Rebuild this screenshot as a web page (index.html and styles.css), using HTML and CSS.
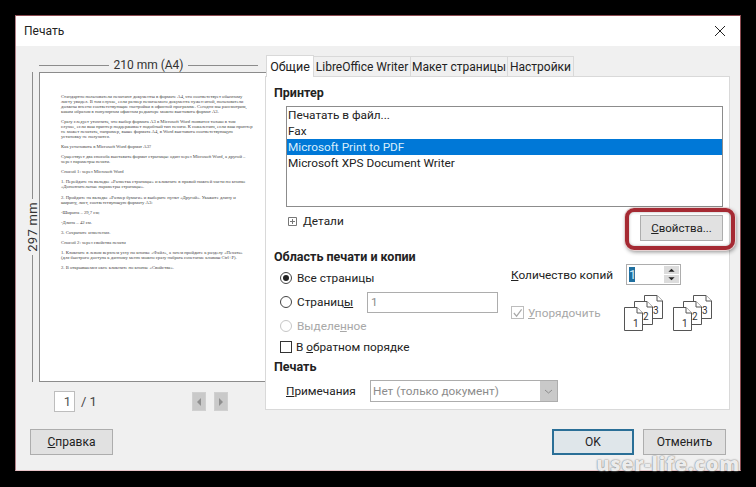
FILE: index.html
```html
<!DOCTYPE html>
<html lang="ru">
<head>
<meta charset="utf-8">
<title>Печать</title>
<link rel="stylesheet" href="styles.css">
</head>
<body>
<div class="window">
  <header class="titlebar">
    <span class="title">Печать</span>
    <svg class="close" width="12" height="12" viewBox="0 0 12 12"><path d="M1 1L11 11M11 1L1 11" fill="none" stroke="#222" stroke-width="1"/></svg>
  </header>
  <div class="content">
    <section class="preview">
      <div class="width-label"><span>210 mm (A4)</span></div>
      <div class="preview-row">
        <div class="height-label"><span>297 mm</span></div>
        <div class="page">
          <p>Стандартно пользователи печатают документы в формате А4, что соответствует обычному<br>листу увидел. В том случае, если размер печатаемого документа нужен иной, пользователи<br>должны внести соответствующие настройки в офисной программе. Сегодня мы рассмотрим,<br>каким образом в популярном офисном редакторе можно выставить формат А3.</p>
          <p>Сразу следует уточнить, что выбор формата А3 в Microsoft Word появится только в том<br>случае, если ваш принтер поддерживает подобный тип печати. К сожалению, если ваш принтер<br>не может печатать, например, выше формата А4, в Word выставить соответствующую<br>установку не получится.</p>
          <p>Как установить в Microsoft Word формат А3?</p>
          <p>Существует два способа выставить формат страницы: один через Microsoft Word, а другой –<br>через параметры печати.</p>
          <p>Способ 1: через Microsoft Word</p>
          <p>1. Перейдите на вкладке «Разметка страницы» и кликните в правой нижней части по кнопке<br>«Дополнительные параметры страницы».</p>
          <p>2. Пройдите на вкладке «Размер бумаги» и выберите пункт «Другой». Укажите длину и<br>ширину, лист, соответствующую формату А3:</p>
          <p>-Ширина – 29,7 см;</p>
          <p>-Длина – 42 см.</p>
          <p>3. Сохраните изменения.</p>
          <p>Способ 2: через свойства печати</p>
          <p>1. Кликните в левом верхнем углу по кнопке «Файл», а затем пройдите к разделу «Печать»<br>(для быстрого доступа к данному меню можно сразу набрать сочетание клавиш Ctrl+P).</p>
          <p>2. В открывшемся окне кликните по кнопке «Свойства».</p>
        </div>
      </div>
      <div class="page-nav">
        <span class="page-input">1</span>
        <span class="page-total">/ 1</span>
        <span class="nav-btn nav-prev"><svg width="6" height="10" viewBox="0 0 6 10"><path d="M5 1L1 5L5 9Z" fill="#8f8f8f"/></svg></span>
        <span class="nav-btn"><svg width="6" height="10" viewBox="0 0 6 10"><path d="M1 1L5 5L1 9Z" fill="#8f8f8f"/></svg></span>
      </div>
    </section>
    <section class="settings">
      <nav class="tabs">
        <span class="tab tab-active">Общие</span>
        <span class="tab tab-lo">LibreOffice Writer</span>
        <span class="tab tab-layout">Макет страницы</span>
        <span class="tab tab-set">Настройки</span>
      </nav>
      <div class="panel">
        <h2 class="heading">Принтер</h2>
        <ul class="printers">
          <li>Печатать в файл...</li>
          <li>Fax</li>
          <li class="selected">Microsoft Print to PDF</li>
          <li>Microsoft XPS Document Writer</li>
        </ul>
        <div class="details-row">
          <div class="details">
            <svg class="expander" width="9" height="9" viewBox="0 0 9 9"><path d="M.5.5h8v8h-8zM2 4.500h5M4.500 2v5" fill="#fff" stroke="#777"/></svg>
            <span>Детали</span>
          </div>
          <button class="btn props"><u>С</u>войства...</button>
        </div>
        <h2 class="heading heading-area">Область печати и копии</h2>
        <div class="area">
          <div class="options">
            <label class="opt"><span class="radio radio-on"></span><span>Все страницы</span></label>
            <label class="opt"><span class="radio"></span><span class="pages-label">Страниц<u>ы</u></span><span class="pages-input">1</span></label>
            <label class="opt opt-off"><span class="radio radio-off"></span><span>Выделе<u>н</u>ное</span></label>
            <label class="opt opt-check"><span class="check"></span><span>В <u>о</u>братном порядке</span></label>
          </div>
          <div class="copies">
            <div class="copy-row">
              <span class="copy-label"><u>К</u>оличество копий</span>
              <span class="spin">
                <span class="spin-value"><span class="spin-sel">1</span></span>
                <span class="spin-btns">
                  <svg width="15" height="9" viewBox="0 0 15 9"><path d="M4 6.500L7.500 3L11 6.500Z" fill="#222"/></svg>
                  <svg width="15" height="9" viewBox="0 0 15 9"><path d="M4 2.500L7.500 6L11 2.500Z" fill="#222"/></svg>
                </span>
              </span>
            </div>
            <div class="collate-row">
              <span class="collate opt-off">
                <span class="check check-off"><svg width="12" height="12" viewBox="0 0 12 12"><path d="M2 6l3 3.500L10.500 2" fill="none" stroke="#a9a9a9" stroke-width="1.300"/></svg></span>
                <span><u>У</u>порядочить</span>
              </span>
              <span class="stack-icons">
                <svg class="stack" width="39" height="36" viewBox="0 0 39 36">
                  <g fill="#fff" stroke="#555"><path d="M20.500.5H33L38.500 6V23.500H20.500Z"/><path d="M33 .5V6H38.500"/><path d="M10.500 6.500H23L28.500 12V29.500H10.500Z"/><path d="M23 6.500V12H28.500"/><path d="M.5 12.500H13L18.500 18V35.500H.5Z"/><path d="M13 12.500V18H18.500"/></g>
                  <g class="stack-num"><text x="29" y="19">3</text><text x="19" y="25">2</text><text x="9" y="32">1</text></g>
                </svg>
                <svg class="stack" width="39" height="36" viewBox="0 0 39 36">
                  <g fill="#fff" stroke="#555"><path d="M20.500.5H33L38.500 6V23.500H20.500Z"/><path d="M33 .5V6H38.500"/><path d="M10.500 6.500H23L28.500 12V29.500H10.500Z"/><path d="M23 6.500V12H28.500"/><path d="M.5 12.500H13L18.500 18V35.500H.5Z"/><path d="M13 12.500V18H18.500"/></g>
                  <g class="stack-num"><text x="29" y="19">3</text><text x="19" y="25">2</text><text x="9" y="32">1</text></g>
                </svg>
              </span>
            </div>
          </div>
        </div>
        <h2 class="heading heading-print">Печать</h2>
        <div class="notes-row">
          <span class="notes-label"><u>П</u>римечания</span>
          <span class="select">
            <span class="select-value">Нет (только документ)</span>
            <span class="select-arrow"><svg width="9" height="5" viewBox="0 0 9 5"><path d="M1 1L4.500 4L8 1" fill="none" stroke="#8c8c8c"/></svg></span>
          </span>
        </div>
      </div>
    </section>
  </div>
  <footer class="footer">
    <button class="btn"><u>С</u>правка</button>
    <span class="footer-right">
      <button class="btn btn-ok">OK</button>
      <button class="btn">Отменить</button>
    </span>
  </footer>
  <div class="callout"></div>
</div>
<div class="watermark">user-life.com</div>
</body>
</html>
```

FILE: styles.css
```css
* { box-sizing: border-box; }
html, body { margin: 0; height: 100%; }
body {
  background: #000;
  font-family: "Roboto", sans-serif;
  font-size: 11.800px;
  color: #222;
  overflow: hidden;
  position: relative;
  padding: 15px 15px 0;
}
.window {
  position: relative;
  width: 726px;
  height: 456px;
  background: #f0f0f0;
  border: 1px solid #8a4a50;
  border-bottom-color: #e8c4c8;
  border-left-color: #b08088;
  display: flex;
  flex-direction: column;
}
.titlebar {
  height: 30px;
  flex: none;
  background: #fff;
  display: flex;
  align-items: center;
  justify-content: space-between;
  padding: 0 14px 0 8px;
}
.title { font-size: 12px; }
.content {
  display: flex;
  gap: 7px;
  padding: 9px 11px 0 10px;
}
.preview { width: 232px; flex: none; }
.width-label {
  margin: 3px 0 0 13px;
  height: 14px;
  display: flex;
  align-items: center;
  gap: 4px;
  font-size: 12px;
  color: #333;
}
.width-label::before, .width-label::after {
  content: "";
  flex: 1;
  height: 1px;
  background: #8c8c8c;
}
.preview-row { display: flex; height: 310px; }
.height-label {
  width: 13px;
  flex: none;
  display: flex;
  flex-direction: column;
  align-items: center;
  gap: 3px;
  font-size: 13px;
  letter-spacing: .3px;
  color: #333;
}
.height-label::before, .height-label::after {
  content: "";
  flex: 1;
  width: 1px;
  background: #8c8c8c;
}
.height-label::before { flex: 0 0 127px; }
.height-label span {
  writing-mode: vertical-rl;
  transform: rotate(180deg);
  line-height: 13px;
}
.page {
  flex: 1;
  background: #fff;
  border: 1px solid #8c8c8c;
  padding: 21px 20px 0 21px;
  font-family: "Liberation Serif", serif;
  font-size: 4.700px;
  line-height: 5px;
  color: #444;
  white-space: nowrap;
}
.page p { margin: 0 0 5.100px; }
.page-nav {
  display: flex;
  align-items: center;
  margin: 9px 0 0 28px;
  height: 21px;
  color: #444;
  font-size: 13px;
}
.page-input {
  width: 21px;
  height: 21px;
  background: #fff;
  border: 1px solid #bdbdbd;
  text-align: right;
  padding-right: 3px;
  line-height: 19px;
  color: #555;
}
.page-total { margin-left: 6px; width: 111px; }
.nav-btn {
  width: 14px;
  height: 19px;
  background: #c9c9c9;
  display: flex;
  align-items: center;
  justify-content: center;
  border: 1px solid #d0d0d0;
}
.nav-prev { margin-right: 8px; }
.settings { width: 465px; flex: none; }
.tabs { display: flex; height: 22px; align-items: flex-end; padding-left: 1px; position: relative; z-index: 1; }
.tab {
  height: 20px;
  display: flex;
  align-items: center;
  justify-content: center;
  border: 1px solid #d9d9d9;
  border-left: 0;
  border-bottom: 0;
  background: #f0f0f0;
  font-size: 12px;
  white-space: nowrap;
  margin-bottom: 1px;
}
.tab-active {
  width: 48px;
  height: 22px;
  background: #fff;
  border-left: 1px solid #d9d9d9;
  margin-bottom: 0;
  font-size: 12.500px;
}
.tab-lo { width: 97px; }
.tab-layout { width: 97px; }
.tab-set { width: 66px; }
.panel {
  height: 334px;
  margin-top: -1px;
  background: #fff;
  border: 1px solid #d9d9d9;
  padding: 8px 0 0 8px;
}
.heading {
  margin: 0;
  font-size: 12.500px;
  font-weight: 700;
  line-height: 16px;
  color: #222;
}
.printers {
  list-style: none;
  margin: 5px 6px 0 12px;
  padding: 0;
  height: 101px;
  border: 1px solid #8c8c8c;
  line-height: 16px;
}
.printers li { padding-left: 1px; height: 16px; }
.printers .selected { background: #0078d7; color: #d8eefc; }
.details-row {
  display: flex;
  justify-content: space-between;
  align-items: flex-start;
  margin: 6px 6px 0 14px;
  height: 28px;
}
.details { display: flex; align-items: center; gap: 6px; height: 16px; }
.btn {
  width: 83px;
  height: 26px;
  background: #e1e1e1;
  border: 1px solid #adadad;
  font-family: inherit;
  font-size: 12px;
  color: #222;
  padding: 0;
}
.props { margin-top: 2px; font-size: 11.500px; }
.heading-area { margin-top: 8px; }
.area { display: flex; height: 94px; }
.options { width: 237px; padding: 1px 0 0 6px; flex: none; }
.opt {
  display: flex;
  align-items: center;
  height: 24px;
}
.opt-off { color: #a8a8a8; }
.opt-check { height: 18px; }
.radio {
  width: 12px;
  height: 12px;
  border-radius: 50%;
  border: 1px solid #444;
  background: #fff;
  margin-right: 5px;
  flex: none;
  position: relative;
}
.radio-on::after {
  content: "";
  position: absolute;
  inset: 2px;
  border-radius: 50%;
  background: #222;
}
.radio-off { border-color: #c6c6c6; }
.pages-label { width: 71px; }
.pages-input {
  width: 131px;
  height: 21px;
  margin-left: -1px;
  border: 1px solid #adadad;
  background: #fff;
  color: #8c8c8c;
  padding-left: 3px;
  line-height: 19px;
}
.check {
  width: 12px;
  height: 12px;
  border: 1px solid #333;
  background: #fff;
  margin-right: 4px;
  flex: none;
}
.copies { flex: 1; margin-top: -1px; }
.copy-row { display: flex; align-items: center; height: 21px; }
.copy-label { width: 115px; }
.spin {
  width: 55px;
  height: 21px;
  display: flex;
  border: 1px solid #adadad;
  padding: 2px;
}
.spin-value { flex: 1; display: block; }
.spin-sel {
  display: block;
  width: 6px;
  height: 15px;
  background: #1f6f9f;
  color: #d8eefc;
  line-height: 15px;
  font-size: 13px;
  text-align: center;
}
.spin-btns {
  width: 15px;
  display: flex;
  flex-direction: column;
  gap: 1px;
  margin: -1px -1px -1px 0;
}
.spin-btns svg { display: block; background: #dcdcdc; height: 8.500px; }
.collate-row { display: flex; margin-top: 10px; }
.collate {
  display: flex;
  align-items: center;
  width: 113px;
  height: 13px;
  margin-top: 11px;
}
.check-off { border-color: #bdbdbd; width: 13px; height: 13px; margin-right: 4px; display: flex; align-items: center; justify-content: center; }
.stack-icons { display: flex; gap: 10px; }
.stack { display: block; }
.stack-num text { font-size: 10px; fill: #333; stroke: none; font-family: "Roboto", sans-serif; }
.heading-print { margin-top: 0; }
.notes-row { display: flex; align-items: center; margin: 5px 0 0 12px; height: 22px; }
.notes-label { width: 84px; }
.select {
  width: 188px;
  height: 22px;
  display: flex;
  border: 1px solid #adadad;
  color: #8c8c8c;
}
.select-value { flex: 1; padding-left: 2px; line-height: 20px; }
.select-arrow {
  width: 17px;
  background: #c9c9c9;
  display: flex;
  align-items: center;
  justify-content: center;
}
.footer {
  margin-top: auto;
  padding: 0 14px 15px 14px;
  display: flex;
  justify-content: space-between;
}
.footer-right { display: flex; gap: 9px; }
.btn-ok { width: 82px; border: 2px solid #2a6f97; background: #dfe6ea; }
.callout {
  position: absolute;
  left: 609px;
  top: 192px;
  width: 110px;
  height: 42px;
  border: 4px solid #a52a33;
  border-radius: 9px;
  box-shadow: 0 0 0 1px #e6d2d2, 1px 2px 4px rgba(0,0,0,.45), inset 0 0 3px rgba(0,0,0,.3);
}
.watermark {
  position: absolute;
  right: 16px;
  top: 451px;
  font-family: "Open Sans", sans-serif;
  font-weight: 800;
  font-size: 20px;
  letter-spacing: .7px;
  line-height: 26px;
  color: rgba(255,255,255,.85);
  text-shadow: 0 0 2px #8a8a8a, 0 0 1px #8a8a8a;
}
```
